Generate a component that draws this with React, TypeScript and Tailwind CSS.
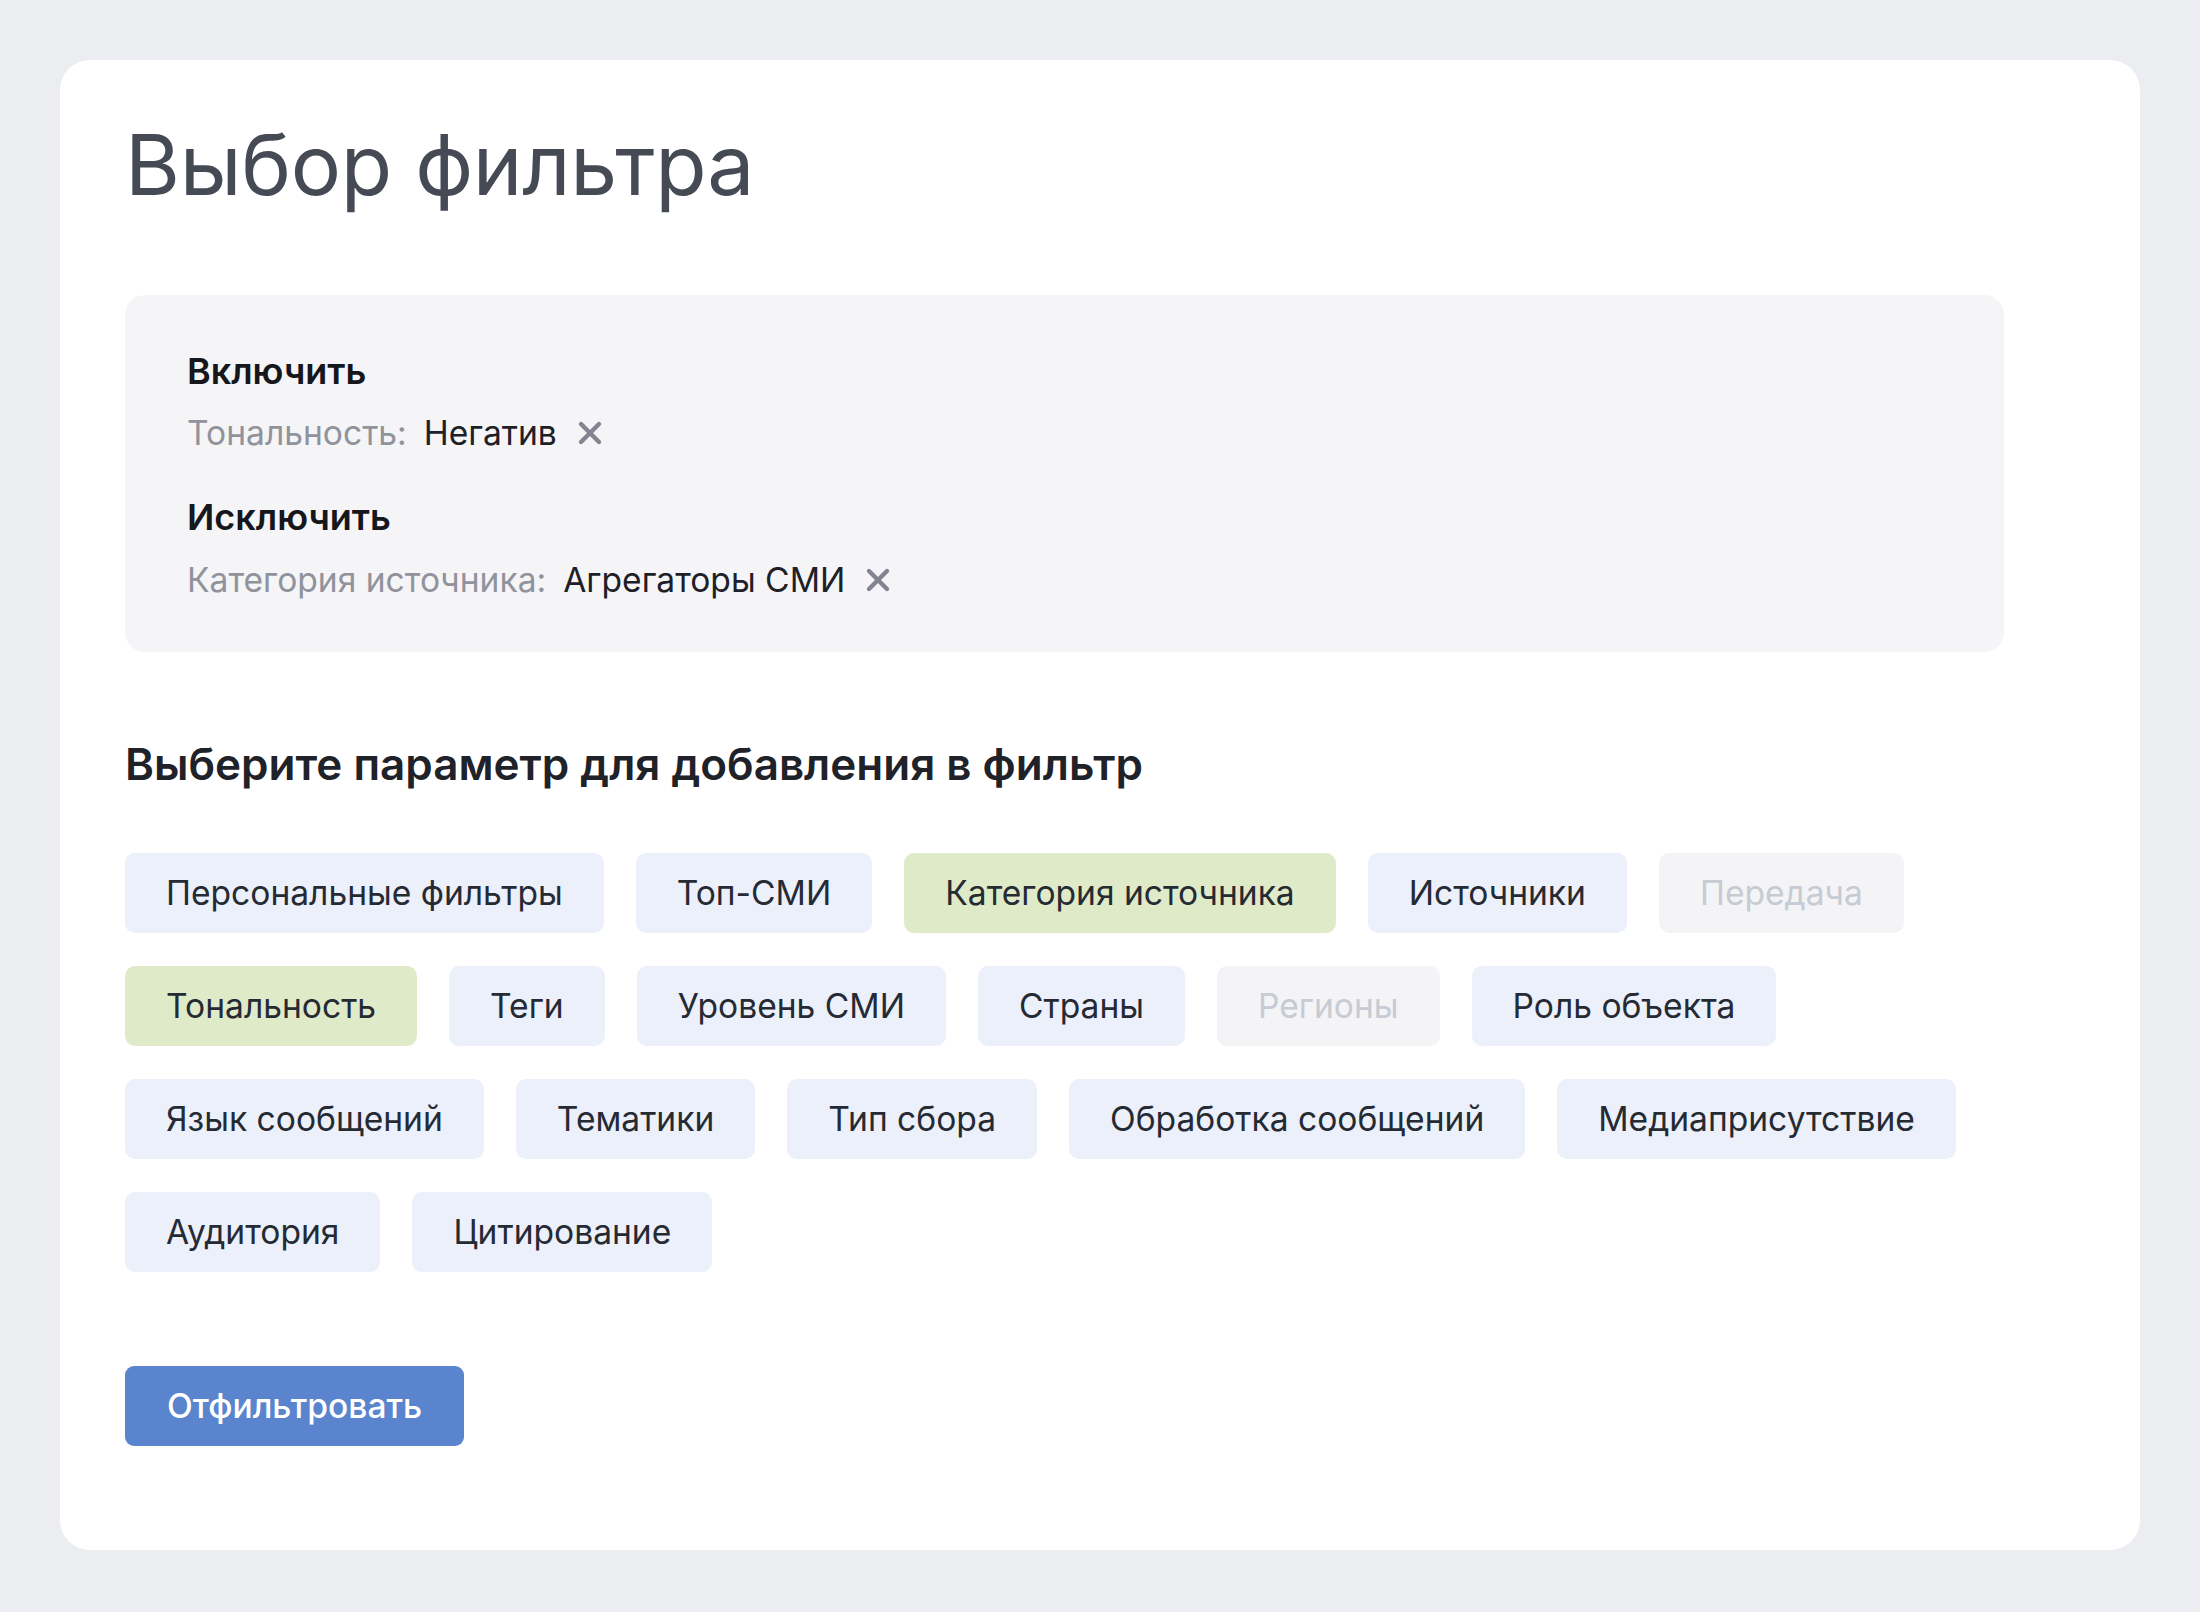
import React from 'react';

type ChipKind = 'default' | 'active' | 'disabled';

interface Chip {
    label: string;
    kind: ChipKind;
}

const chips: Chip[] = [
    { label: 'Персональные фильтры', kind: 'default' },
    { label: 'Топ-СМИ', kind: 'default' },
    { label: 'Категория источника', kind: 'active' },
    { label: 'Источники', kind: 'default' },
    { label: 'Передача', kind: 'disabled' },
    { label: 'Тональность', kind: 'active' },
    { label: 'Теги', kind: 'default' },
    { label: 'Уровень СМИ', kind: 'default' },
    { label: 'Страны', kind: 'default' },
    { label: 'Регионы', kind: 'disabled' },
    { label: 'Роль объекта', kind: 'default' },
    { label: 'Язык сообщений', kind: 'default' },
    { label: 'Тематики', kind: 'default' },
    { label: 'Тип сбора', kind: 'default' },
    { label: 'Обработка сообщений', kind: 'default' },
    { label: 'Медиаприсутствие', kind: 'default' },
    { label: 'Аудитория', kind: 'default' },
    { label: 'Цитирование', kind: 'default' },
];

const chipStyles: Record<ChipKind, string> = {
    default: 'bg-[#ebf0fb] text-[#262a33]',
    active: 'bg-[#dfebc8] text-[#262a33]',
    disabled: 'bg-[#f4f4f6] text-[#c7cbd3]',
};

function CloseIcon() {
    return (
        <svg width="26" height="26" viewBox="0 0 26 26" className="shrink-0">
            <path d="M4 4 L22 22 M22 4 L4 22" stroke="#82858f" strokeWidth="4.4" strokeLinecap="round" />
        </svg>
    );
}

function FilterRow({ name, value }: { name: string; value: string }) {
    return (
        <div className="flex items-center text-[33.6px] leading-[40px]">
            <span className="text-[#90939c]">{name}</span>
            <span className="ml-[17px] text-[#1e2028]">{value}</span>
            <span className="ml-[20px] flex items-center">
                <CloseIcon />
            </span>
        </div>
    );
}

export default function App() {
    return (
        <div className="min-h-[1612px] w-full bg-[#ecedf0] pt-[60px] pl-[60px] font-['Inter',sans-serif]">
            <div className="w-[2080px] h-[1490px] bg-white rounded-[30px] pl-[65px] pt-[63px]">
                <h1 className="text-[84px] leading-none text-[#464a54] tracking-[-0.3px]">Выбор фильтра</h1>

                {/* Selected filters */}
                <div className="mt-[88px] w-[1879px] h-[357px] bg-[#f5f5f7] rounded-[20px] pl-[62px] pt-[56px]">
                    <div className="text-[36px] leading-[40px] font-semibold text-[#15171c]">Включить</div>
                    <div className="mt-[22px]">
                        <FilterRow name="Тональность:" value="Негатив" />
                    </div>
                    <div className="mt-[44px] text-[36px] leading-[40px] font-semibold text-[#15171c]">Исключить</div>
                    <div className="mt-[23px]">
                        <FilterRow name="Категория источника:" value="Агрегаторы СМИ" />
                    </div>
                </div>

                <h2 className="mt-[86px] text-[44px] leading-[52px] font-semibold text-[#1f2229]">
                    Выберите параметр для добавления в фильтр
                </h2>

                <div className="mt-[63px] w-[1879px] flex flex-wrap gap-x-[32px] gap-y-[33px]">
                    {chips.map((chip) => (
                        <button
                            key={chip.label}
                            className={`h-[80px] px-[41px] rounded-[10px] text-[33.6px] leading-none flex items-center ${chipStyles[chip.kind]}`}
                        >
                            {chip.label}
                        </button>
                    ))}
                </div>

                <button className="mt-[94px] h-[80px] px-[42px] rounded-[9px] bg-[#5b84ce] text-white text-[33.6px] font-medium leading-none flex items-center">
                    Отфильтровать
                </button>
            </div>
        </div>
    );
}
